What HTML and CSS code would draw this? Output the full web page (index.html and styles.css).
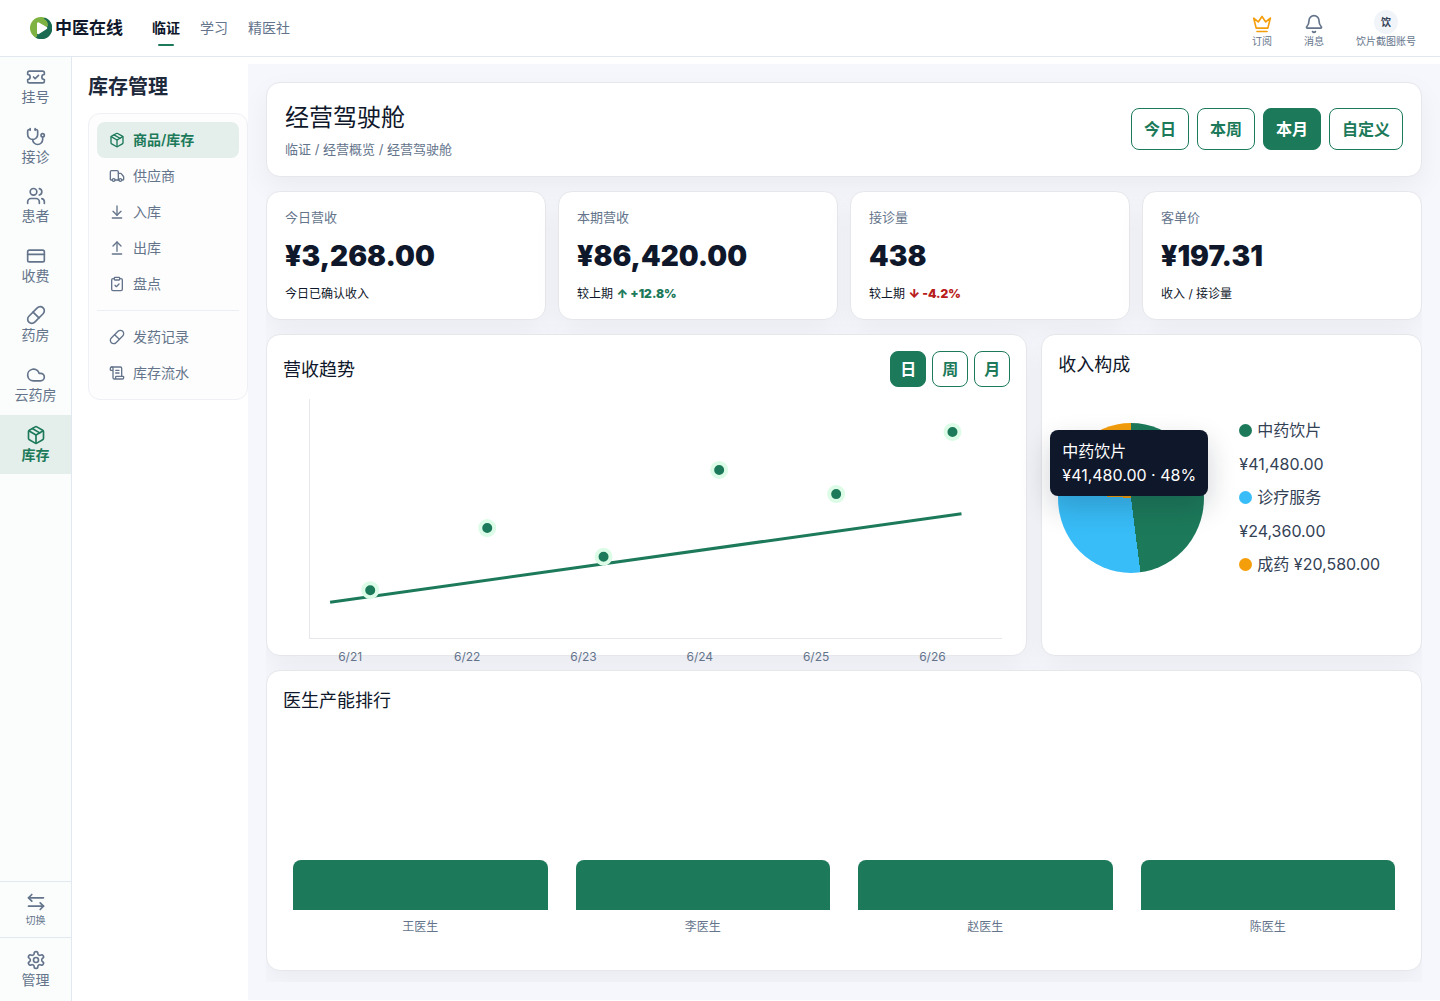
FILE: index.html
```
<!DOCTYPE html>
<html lang="zh-CN">
<head>
    <meta charset="UTF-8">
    <meta name="viewport" content="width=device-width, initial-scale=1.0">
    <title>经营驾驶舱 - 中医在线</title>
    <link rel="stylesheet" href="styles.css">
</head>
<body>
<!-- Shared icon shapes -->
<svg class="sprite" aria-hidden="true">
    <symbol id="i-ticket" viewBox="0 0 24 24"><path d="M2 9a3 3 0 1 1 0 6v2a2 2 0 0 0 2 2h16a2 2 0 0 0 2-2v-2a3 3 0 1 1 0-6V7a2 2 0 0 0-2-2H4a2 2 0 0 0-2 2Z"/><path d="m9 12 2 2 4-4"/></symbol>
    <symbol id="i-stethoscope" viewBox="0 0 24 24"><path d="M11 2v2"/><path d="M5 2v2"/><path d="M5 3H4a2 2 0 0 0-2 2v4a6 6 0 0 0 12 0V5a2 2 0 0 0-2-2h-1"/><path d="M8 15a6 6 0 0 0 12 0v-3"/><circle cx="20" cy="10" r="2"/></symbol>
    <symbol id="i-users" viewBox="0 0 24 24"><path d="M16 21v-2a4 4 0 0 0-4-4H6a4 4 0 0 0-4 4v2"/><circle cx="9" cy="7" r="4"/><path d="M22 21v-2a4 4 0 0 0-3-3.87"/><path d="M16 3.13a4 4 0 0 1 0 7.75"/></symbol>
    <symbol id="i-card" viewBox="0 0 24 24"><rect x="2" y="5" width="20" height="14" rx="2"/><path d="M2 10h20"/></symbol>
    <symbol id="i-pill" viewBox="0 0 24 24"><path d="m10.5 20.5 10-10a4.95 4.95 0 1 0-7-7l-10 10a4.95 4.95 0 1 0 7 7Z"/><path d="m8.5 8.5 7 7"/></symbol>
    <symbol id="i-cloud" viewBox="0 0 24 24"><path d="M17.5 19H9a7 7 0 1 1 6.71-9h1.79a4.5 4.5 0 1 1 0 9Z"/></symbol>
    <symbol id="i-package" viewBox="0 0 24 24"><path d="M11 21.73a2 2 0 0 0 2 0l7-4A2 2 0 0 0 21 16V8a2 2 0 0 0-1-1.73l-7-4a2 2 0 0 0-2 0l-7 4A2 2 0 0 0 3 8v8a2 2 0 0 0 1 1.73z"/><path d="M12 22V12"/><path d="M3.3 7 12 12l8.7-5"/><path d="m7.5 4.27 9 5.15"/></symbol>
    <symbol id="i-switch" viewBox="0 0 24 24"><path d="M7 3 3 7l4 4"/><path d="M3 7h18"/><path d="m17 21 4-4-4-4"/><path d="M21 17H3"/></symbol>
    <symbol id="i-settings" viewBox="0 0 24 24"><path d="M12.22 2h-.44a2 2 0 0 0-2 2v.18a2 2 0 0 1-1 1.73l-.43.25a2 2 0 0 1-2 0l-.15-.08a2 2 0 0 0-2.73.73l-.22.38a2 2 0 0 0 .73 2.73l.15.1a2 2 0 0 1 1 1.72v.51a2 2 0 0 1-1 1.74l-.15.09a2 2 0 0 0-.73 2.73l.22.38a2 2 0 0 0 2.73.73l.15-.08a2 2 0 0 1 2 0l.43.25a2 2 0 0 1 1 1.73V20a2 2 0 0 0 2 2h.44a2 2 0 0 0 2-2v-.18a2 2 0 0 1 1-1.73l.43-.25a2 2 0 0 1 2 0l.15.08a2 2 0 0 0 2.73-.73l.22-.39a2 2 0 0 0-.73-2.73l-.15-.08a2 2 0 0 1-1-1.74v-.5a2 2 0 0 1 1-1.74l.15-.09a2 2 0 0 0 .73-2.73l-.22-.38a2 2 0 0 0-2.73-.73l-.15.08a2 2 0 0 1-2 0l-.43-.25a2 2 0 0 1-1-1.73V4a2 2 0 0 0-2-2z"/><circle cx="12" cy="12" r="3"/></symbol>
    <symbol id="i-truck" viewBox="0 0 24 24"><path d="M14 18V6a2 2 0 0 0-2-2H4a2 2 0 0 0-2 2v11a1 1 0 0 0 1 1h2"/><path d="M15 18H9"/><path d="M19 18h2a1 1 0 0 0 1-1v-3.65a1 1 0 0 0-.22-.62l-3.48-4.35A1 1 0 0 0 17.52 8H14"/><circle cx="17" cy="18" r="2"/><circle cx="7" cy="18" r="2"/></symbol>
    <symbol id="i-in" viewBox="0 0 24 24"><path d="M12 17V3"/><path d="m6 11 6 6 6-6"/><path d="M19 21H5"/></symbol>
    <symbol id="i-out" viewBox="0 0 24 24"><path d="m18 9-6-6-6 6"/><path d="M12 3v14"/><path d="M5 21h14"/></symbol>
    <symbol id="i-clipboard" viewBox="0 0 24 24"><rect x="8" y="2" width="8" height="4" rx="1"/><path d="M16 4h2a2 2 0 0 1 2 2v14a2 2 0 0 1-2 2H6a2 2 0 0 1-2-2V6a2 2 0 0 1 2-2h2"/><path d="m9 14 2 2 4-4"/></symbol>
    <symbol id="i-scroll" viewBox="0 0 24 24"><path d="M15 12h-5"/><path d="M15 8h-5"/><path d="M19 17V5a2 2 0 0 0-2-2H4"/><path d="M8 21h12a2 2 0 0 0 2-2v-1a1 1 0 0 0-1-1H11a1 1 0 0 0-1 1v1a2 2 0 1 1-4 0V5a2 2 0 1 0-4 0v2a1 1 0 0 0 1 1h3"/></symbol>
    <symbol id="i-crown" viewBox="0 0 24 24"><path d="M2 5l3 12h14l3-12-5.500 4.500L12 3 7.500 9.500z"/><path d="M6 21h12"/></symbol>
    <symbol id="i-bell" viewBox="0 0 24 24"><path d="M10.268 21a2 2 0 0 0 3.464 0"/><path d="M3.262 15.326A1 1 0 0 0 4 17h16a1 1 0 0 0 .74-1.673C19.41 13.956 18 12.499 18 8A6 6 0 0 0 6 8c0 4.499-1.411 5.956-2.738 7.326"/></symbol>
</svg>

<header class="topbar">
    <a class="brand" href="#">
        <svg class="brand-logo" viewBox="0 0 22 22" aria-hidden="true">
            <circle cx="11" cy="11" r="11" fill="#7eb343"/>
            <path d="M15 0.800A11 11 0 1 1 5.500 20.500C8 20 7 18 7 15L18 9C18 5 16.500 3 13.500 1.500Z" fill="#1b6b52"/>
            <path d="M7 6.500v9.500a1.200 1.200 0 0 0 1.900 1l7.800-5a1.200 1.200 0 0 0 0-2L8.900 5.500a1.200 1.200 0 0 0-1.900 1Z" fill="#fff"/>
        </svg>
        <span>中医在线</span>
    </a>
    <nav class="top-nav">
        <a class="active" href="#">临证</a>
        <a href="#">学习</a>
        <a href="#">精医社</a>
    </nav>
    <div class="top-actions">
        <button type="button"><svg class="icon crown"><use href="#i-crown"/></svg>订阅</button>
        <button type="button"><svg class="icon"><use href="#i-bell"/></svg>消息</button>
        <button type="button"><span class="avatar">饮</span>饮片截图账号</button>
    </div>
</header>

<div class="layout">
    <aside class="rail">
        <nav>
            <a href="#"><svg class="icon"><use href="#i-ticket"/></svg>挂号</a>
            <a href="#"><svg class="icon"><use href="#i-stethoscope"/></svg>接诊</a>
            <a href="#"><svg class="icon"><use href="#i-users"/></svg>患者</a>
            <a href="#"><svg class="icon"><use href="#i-card"/></svg>收费</a>
            <a href="#"><svg class="icon"><use href="#i-pill"/></svg>药房</a>
            <a href="#"><svg class="icon"><use href="#i-cloud"/></svg>云药房</a>
            <a class="active" href="#"><svg class="icon"><use href="#i-package"/></svg>库存</a>
        </nav>
        <div class="rail-bottom">
            <button class="switch" type="button"><svg class="icon"><use href="#i-switch"/></svg>切换</button>
            <a class="manage" href="#"><svg class="icon"><use href="#i-settings"/></svg>管理</a>
        </div>
    </aside>

    <aside class="sidebar">
        <h2>库存管理</h2>
        <nav class="menu">
            <a class="active" href="#"><svg class="icon"><use href="#i-package"/></svg>商品/库存</a>
            <a href="#"><svg class="icon"><use href="#i-truck"/></svg>供应商</a>
            <a href="#"><svg class="icon"><use href="#i-in"/></svg>入库</a>
            <a href="#"><svg class="icon"><use href="#i-out"/></svg>出库</a>
            <a href="#"><svg class="icon"><use href="#i-clipboard"/></svg>盘点</a>
            <hr>
            <a href="#"><svg class="icon"><use href="#i-pill"/></svg>发药记录</a>
            <a href="#"><svg class="icon"><use href="#i-scroll"/></svg>库存流水</a>
        </nav>
    </aside>

    <main class="content">
        <section class="card page-head">
            <div>
                <h1>经营驾驶舱</h1>
                <p>临证 / 经营概览 / 经营驾驶舱</p>
            </div>
            <div class="ranges">
                <button type="button">今日</button>
                <button type="button">本周</button>
                <button class="active" type="button">本月</button>
                <button type="button">自定义</button>
            </div>
        </section>

        <div class="board">
            <!-- Key figures -->
            <section class="stats">
                <article class="card stat">
                    <h3>今日营收</h3>
                    <strong>¥3,268.00</strong>
                    <p>今日已确认收入</p>
                </article>
                <article class="card stat">
                    <h3>本期营收</h3>
                    <strong>¥86,420.00</strong>
                    <p>较上期 <b class="up">↑ +12.8%</b></p>
                </article>
                <article class="card stat">
                    <h3>接诊量</h3>
                    <strong>438</strong>
                    <p>较上期 <b class="down">↓ -4.2%</b></p>
                </article>
                <article class="card stat">
                    <h3>客单价</h3>
                    <strong>¥197.31</strong>
                    <p>收入 / 接诊量</p>
                </article>
            </section>

            <div class="charts">
                <!-- Revenue trend -->
                <section class="card panel">
                    <div class="panel-head">
                        <h2>营收趋势</h2>
                        <div class="units">
                            <button class="active" type="button">日</button>
                            <button type="button">周</button>
                            <button type="button">月</button>
                        </div>
                    </div>
                    <svg class="trend" role="img" aria-label="营收趋势">
                        <line class="trend-line" x1="2.9%" y1="85%" x2="94.1%" y2="48%"/>
                        <g class="points">
                            <circle cx="8.7%" cy="80%" r="7"/>
                            <circle cx="25.6%" cy="54%" r="7"/>
                            <circle cx="42.4%" cy="66%" r="7"/>
                            <circle cx="59.1%" cy="29.7%" r="7"/>
                            <circle cx="76%" cy="39.8%" r="7"/>
                            <circle cx="92.8%" cy="13.8%" r="7"/>
                        </g>
                        <g class="days">
                            <text x="5.8%" y="262">6/21</text>
                            <text x="22.7%" y="262">6/22</text>
                            <text x="39.5%" y="262">6/23</text>
                            <text x="56.3%" y="262">6/24</text>
                            <text x="73.1%" y="262">6/25</text>
                            <text x="89.9%" y="262">6/26</text>
                        </g>
                    </svg>
                </section>

                <!-- Income split -->
                <section class="card panel">
                    <h2>收入构成</h2>
                    <div class="split">
                        <div class="pie">
                            <div class="tooltip">中药饮片<br>¥41,480.00 · 48%</div>
                        </div>
                        <ul class="legend">
                            <li><i class="dot herb"></i>中药饮片 ¥41,480.00</li>
                            <li><i class="dot service"></i>诊疗服务 ¥24,360.00</li>
                            <li><i class="dot patent"></i>成药 ¥20,580.00</li>
                        </ul>
                    </div>
                </section>
            </div>

            <!-- Doctor ranking -->
            <section class="card panel">
                <h2>医生产能排行</h2>
                <div class="bars">
                    <div class="bar"><i></i><span>王医生</span></div>
                    <div class="bar"><i></i><span>李医生</span></div>
                    <div class="bar"><i></i><span>赵医生</span></div>
                    <div class="bar"><i></i><span>陈医生</span></div>
                </div>
            </section>
        </div>
    </main>
</div>
</body>
</html>
```

FILE: styles.css
```
* {
    box-sizing: border-box;
}

body {
    margin: 0;
    min-height: 100vh;
    display: flex;
    flex-direction: column;
    font-family: Inter, "Noto Sans CJK SC", sans-serif;
    font-size: 14px;
    color: #0f172a;
    background-color: #ffffff;
}

h1, h2, h3, p, ul {
    margin: 0;
    padding: 0;
}

a {
    color: inherit;
    text-decoration: none;
}

button {
    font-family: inherit;
    color: inherit;
    background: none;
    border: none;
    padding: 0;
    cursor: pointer;
}

.sprite {
    display: none;
}

.icon {
    display: block;
    width: 20px;
    height: 20px;
    flex: none;
    fill: none;
    stroke: currentColor;
    stroke-width: 2;
    stroke-linecap: round;
    stroke-linejoin: round;
}

/* Top bar */
.topbar {
    display: flex;
    align-items: center;
    height: 57px;
    padding: 0 24px 0 30px;
    border-bottom: 1px solid #e2e8f0;
    color: #64748b;
}

.brand {
    display: flex;
    align-items: center;
    gap: 3px;
    margin-right: 29px;
    font-size: 17px;
    font-weight: 600;
    line-height: 22px;
    color: #0f172a;
}

.brand-logo {
    width: 22px;
    height: 22px;
}

.top-nav {
    display: flex;
    gap: 20px;
}

.top-nav a {
    position: relative;
    line-height: 20px;
}

.top-nav .active {
    font-weight: 600;
    color: #0f172a;
}

.top-nav .active::after {
    content: "";
    position: absolute;
    left: 6px;
    bottom: -8px;
    width: 16px;
    height: 2px;
    border-radius: 1px;
    background-color: #1c7a5a;
}

.top-actions {
    display: flex;
    align-items: flex-end;
    gap: 32px;
    margin-left: auto;
    padding-top: 2px;
}

.top-actions button {
    display: flex;
    flex-direction: column;
    align-items: center;
    font-size: 10px;
    line-height: 14px;
}

.crown {
    color: #f59e0b;
}

.avatar {
    width: 24px;
    height: 24px;
    border-radius: 50%;
    background-color: #f1f5f9;
    color: #334155;
    font-weight: 600;
    line-height: 24px;
}

/* Left navigation */
.layout {
    flex: 1;
    display: flex;
}

.rail {
    width: 72px;
    flex: none;
    display: flex;
    flex-direction: column;
    justify-content: space-between;
    border-right: 1px solid #e2e8f0;
    background-color: #fbfdfc;
    color: #64748b;
    line-height: 1.4;
}

.rail a, .rail button {
    display: flex;
    flex-direction: column;
    align-items: center;
    width: 100%;
    padding: 10px 0;
}

.rail .active {
    background-color: #e4eeeb;
    color: #1c7a5a;
    font-weight: 600;
}

.rail .switch {
    gap: 1px;
    border-top: 1px solid #e2e8f0;
    font-size: 10px;
    line-height: 14px;
}

.rail .manage {
    border-top: 1px solid #e2e8f0;
    padding: 12px 0 11px;
}

.sidebar {
    width: 176px;
    flex: none;
    padding: 16px 0 0 16px;
}

.sidebar h2 {
    margin-bottom: 12px;
    font-size: 20px;
    font-weight: 600;
    line-height: 28px;
    color: #1e293b;
}

.menu {
    padding: 8px;
    border: 1px solid #eef0f6;
    border-radius: 12px;
    background-color: #fdfdfd;
    color: #64748b;
}

.menu a {
    display: flex;
    align-items: center;
    gap: 8px;
    height: 36px;
    padding: 0 12px;
    border-radius: 8px;
    line-height: 20px;
}

.menu .icon {
    width: 16px;
    height: 16px;
}

.menu .active {
    background-color: #e4eeeb;
    color: #1c7a5a;
    font-weight: 600;
}

.menu hr {
    margin: 8px 0;
    border: none;
    border-top: 1px solid #eceef6;
}

/* Dashboard */
.content {
    flex: 1;
    min-width: 0;
    display: flex;
    flex-direction: column;
    gap: 14px;
    margin: 7px 0 1px;
    padding: 18px;
    background-color: #f6f7fc;
}

.card {
    border: 1px solid #e5e7eb;
    border-radius: 14px;
    background-color: #ffffff;
    box-shadow: 0 10px 28px rgba(15, 23, 42, 0.05);
}

.page-head {
    display: flex;
    align-items: center;
    justify-content: space-between;
    padding: 16px 18px 17px;
}

.page-head h1 {
    font-size: 24px;
    font-weight: 400;
    line-height: 38px;
}

.page-head p {
    margin-top: 2px;
    font-size: 13px;
    line-height: 20px;
    color: #64748b;
}

.ranges {
    display: flex;
    gap: 8px;
}

.ranges button, .units button {
    border: 1px solid #1c7a5a;
    border-radius: 8px;
    font-size: 16px;
    font-weight: 600;
    line-height: 22px;
    color: #1c7a5a;
}

.ranges button {
    height: 42px;
    padding: 0 12px;
}

.ranges .active, .units .active {
    background-color: #1c7a5a;
    color: #ffffff;
}

.board {
    flex: 1;
    display: flex;
    flex-direction: column;
    gap: 14px;
    padding-bottom: 11px;
    overflow: hidden;
}

.stats {
    display: grid;
    grid-template-columns: repeat(4, 1fr);
    gap: 12px;
}

.stat {
    padding: 15px 18px;
}

.stat h3 {
    font-size: 13px;
    font-weight: 400;
    line-height: 20px;
    color: #64748b;
}

.stat strong {
    display: block;
    margin: 8px 0;
    font-size: 28px;
    font-weight: 900;
    line-height: 42px;
}

.stat p {
    font-size: 12px;
    line-height: 18px;
    margin-bottom: 1px;
}

.up {
    color: #1c7a5a;
}

.down {
    color: #b91c1c;
}

.stat b {
    font-weight: 900;
}

.charts {
    display: grid;
    grid-template-columns: 2fr 1fr;
    gap: 14px;
}

.panel {
    padding: 16px;
}

.panel h2 {
    font-size: 18px;
    font-weight: 400;
    line-height: 27px;
}

.panel-head {
    display: flex;
    align-items: center;
    justify-content: space-between;
    margin-bottom: 12px;
}

.units {
    display: flex;
    gap: 6px;
}

.units button {
    width: 36px;
    height: 36px;
}

.trend {
    display: block;
    width: calc(100% - 34px);
    height: 240px;
    margin-left: 26px;
    border-left: 1px solid #e5e7eb;
    border-bottom: 1px solid #e5e7eb;
    overflow: visible;
}

.trend-line {
    stroke: #1c7a5a;
    stroke-width: 3;
}

.points circle {
    fill: #1c7a5a;
    stroke: #dcfce7;
    stroke-width: 4;
}

.days text {
    font-size: 12px;
    fill: #64748b;
    text-anchor: middle;
}

.split {
    display: grid;
    grid-template-columns: 146px 1fr;
    gap: 35px;
    align-items: center;
    min-height: 240px;
}

.pie {
    position: relative;
    height: 150px;
    border-radius: 50%;
    background: conic-gradient(#1c7a5a 0 48%, #38bdf8 48% 76%, #f59e0b 76%);
}

.tooltip {
    position: absolute;
    top: 7px;
    left: -8px;
    padding: 9px 12px;
    border-radius: 8px;
    background-color: #0f172a;
    box-shadow: 0 12px 28px rgba(15, 23, 42, 0.2);
    color: #ffffff;
    font-size: 16px;
    line-height: 24px;
    white-space: nowrap;
}

.legend {
    list-style: none;
    font-size: 16px;
    line-height: 2.1;
    color: #334155;
}

.dot {
    display: inline-block;
    width: 13px;
    height: 13px;
    margin-right: 5px;
    border-radius: 50%;
    vertical-align: -1px;
}

.herb {
    background-color: #1c7a5a;
}

.service {
    background-color: #38bdf8;
}

.patent {
    background-color: #f59e0b;
}

.bars {
    display: grid;
    grid-template-columns: repeat(4, 1fr);
    gap: 28px;
    align-items: end;
    height: 240px;
    padding: 0 10px 18px;
}

.bar i {
    display: block;
    height: 50px;
    margin-bottom: 8px;
    border-radius: 8px 8px 0 0;
    background-color: #1c7a5a;
}

.bar span {
    display: block;
    font-size: 12px;
    line-height: 18px;
    text-align: center;
    color: #64748b;
}
```
